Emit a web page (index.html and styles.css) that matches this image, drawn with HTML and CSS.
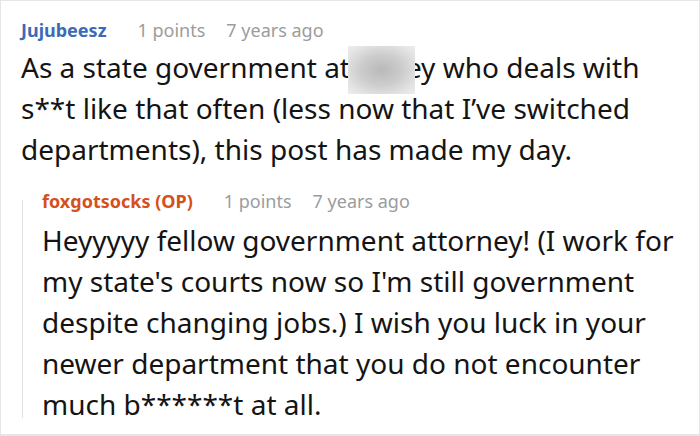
FILE: index.html
```html
<!DOCTYPE html>
<html>
<head>
<meta charset="utf-8">
<link rel="stylesheet" href="styles.css">
</head>
<body>
<div class="thread">
  <div class="comment">
    <div class="meta">
      <span class="user user-blue">Jujubeesz</span>
      <span class="info">1 points</span>
      <span class="info">7 years ago</span>
    </div>
    <p class="body">As a state government at<span class="redact">torn</span>ey who deals with s**t like that often (less now that I’ve switched departments), this post has made my day.</p>
    <div class="reply">
      <div class="meta">
        <span class="user user-op">foxgotsocks (OP)</span>
        <span class="info">1 points</span>
        <span class="info">7 years ago</span>
      </div>
      <p class="body">Heyyyyy fellow government attorney! (I work for my state's courts now so I'm still government despite changing jobs.) I wish you luck in your newer department that you do not encounter much b******t at all.</p>
    </div>
  </div>
</div>
</body>
</html>
```

FILE: styles.css
```css
html, body {
  margin: 0;
  padding: 0;
  background: #ffffff;
}

.thread {
  width: 700px;
  height: 436px;
  box-sizing: border-box;
  border: 1px solid #e6e6e6;
  border-bottom-width: 2px;
  padding: 17px 18px 8px 20px;
  font-family: "Noto Sans", "Open Sans", sans-serif;
}

.meta {
  display: flex;
  gap: 21px;
  font-size: 18px;
  line-height: 24px;
  white-space: nowrap;
}

.user {
  font-weight: 700;
  margin-right: 10px;
}

.user-blue {
  color: #3c6ab6;
}

.user-op {
  color: #d4501d;
}

.info {
  color: #9c9c9c;
}

.body {
  margin: 5px 0 0 0;
  font-size: 28px;
  line-height: 41px;
  color: #141414;
}

.redact {
  position: relative;
}

.redact::after {
  content: "";
  position: absolute;
  left: -2px;
  right: -9px;
  top: -2px;
  bottom: -8px;
  background: radial-gradient(ellipse at 50% 50%, #b9b9b9 0%, #cdcdcd 45%, #e4e4e4 80%, #eeeeee 100%);
}

.reply {
  position: relative;
  margin: 19px 0 0 1px;
  padding-left: 20px;
}

.reply::before {
  content: "";
  position: absolute;
  left: 0;
  top: 11px;
  bottom: 7px;
  width: 1px;
  background: #e3e3e3;
}

.reply .body {
  margin-top: 7px;
}
```
